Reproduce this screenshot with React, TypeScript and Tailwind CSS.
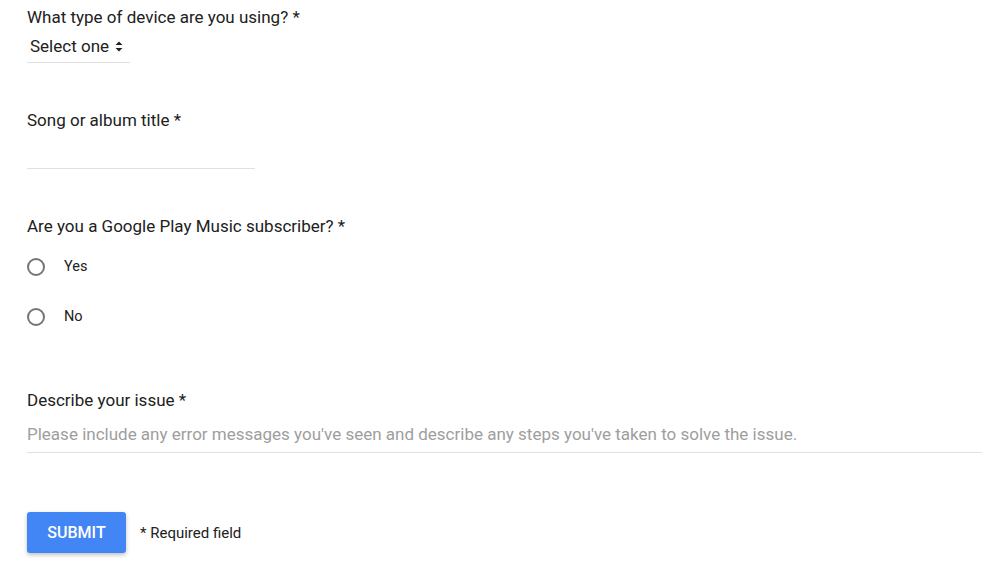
import React from "react";

function Radio({ label }: { label: string }) {
  return (
    <div className="flex items-center h-[20px]">
      <span className="w-[18px] h-[18px] rounded-full border-2 border-[#757575] box-border ml-[27px]" />
      <span className="ml-[19px] text-[14.5px] leading-[20px] text-[#212121]">{label}</span>
    </div>
  );
}

export default function App() {
  return (
    <div
      className="w-[1000px] h-[572px] bg-white text-[#212121] flex flex-col"
      style={{ fontFamily: "Roboto, 'Liberation Sans', sans-serif" }}
    >
      <div className="pl-[27px] pt-[7px] flex flex-col">
        <div className="text-[17px] leading-[20px] h-[20px]">What type of device are you using? *</div>
        <div className="mt-[9px] w-[103px] border-b border-[#e0e0e0] pb-[6px] pl-[3px] flex items-center h-[27px] box-border">
          <span className="text-[17px] leading-[20px]">Select one</span>
          <svg width="8" height="11" viewBox="0 0 8 11" className="ml-[6px] mt-[1px]">
            <path d="M4 0.5 L7.5 4 L0.5 4 Z" fill="#212121" />
            <path d="M4 10.5 L7.5 7 L0.5 7 Z" fill="#212121" />
          </svg>
        </div>
        <div className="mt-[47px] text-[17px] leading-[20px] h-[20px]">Song or album title *</div>
        <div className="w-[228px] h-[39px] border-b border-[#e0e0e0]" />
        <div className="mt-[47px] text-[17px] leading-[20px] h-[20px]">Are you a Google Play Music subscriber? *</div>
      </div>
      <div className="mt-[21px] flex flex-col gap-[30px]">
        <Radio label="Yes" />
        <Radio label="No" />
      </div>
      <div className="pl-[27px] flex flex-col">
        <div className="mt-[63px] text-[17px] leading-[20px] h-[20px]">Describe your issue *</div>
        <div className="mt-[14px] w-[955px] h-[29px] border-b border-[#e0e0e0]">
          <div className="text-[17px] leading-[20px] text-[#9e9e9e]">
            Please include any error messages you've seen and describe any steps you've taken to solve the issue.
          </div>
        </div>
        <div className="mt-[59px] flex items-center">
          <button className="w-[99px] h-[41px] bg-[#4285f4] text-white rounded-[3px] text-[16px] font-medium shadow-[0_2px_4px_rgba(0,0,0,0.25)]">
            SUBMIT
          </button>
          <span className="ml-[14px] text-[15px] leading-[20px] text-[#212121]">* Required field</span>
        </div>
      </div>
    </div>
  );
}
